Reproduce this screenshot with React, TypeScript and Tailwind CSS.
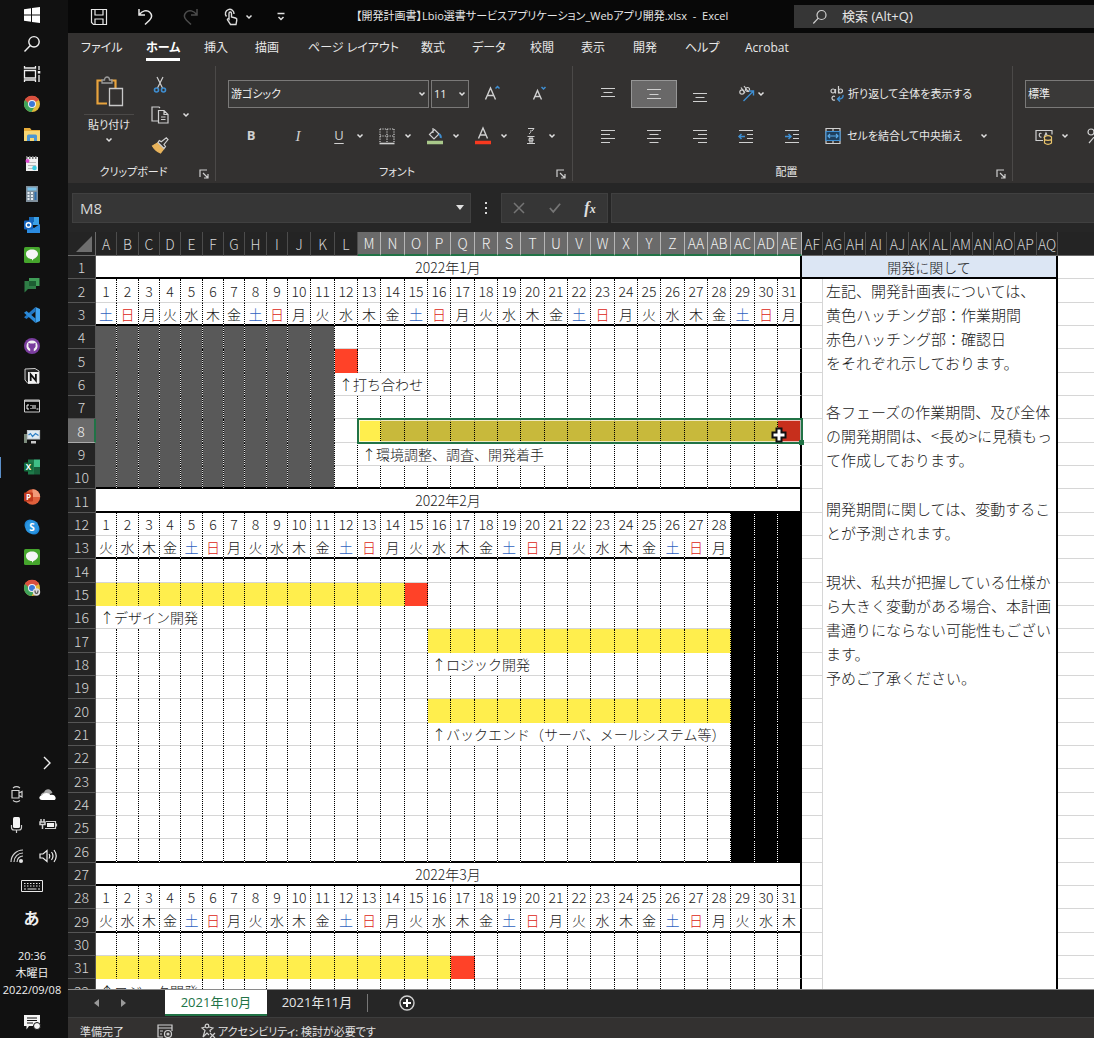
import React from "react";

/* ---------- sheet data ---------- */

type Fill = "gray" | "black" | "yellow" | "red" | "yellowSel" | "redSel";
type Segment = { row: number; start: number; span: number; fill?: Fill; text?: string };

const COLS = 31;
const NOTE_COLS = 12;
const LAST_ROW = 32;

const columnName = (i: number) =>
  i < 26 ? String.fromCharCode(65 + i) : "A" + String.fromCharCode(65 + i - 26);

const columnWidth = (i: number) => {
  if (i < 9) return i % 3 === 1 ? 22 : 21;
  if (i === 30) return 24;
  if (i < COLS) return i % 3 === 1 ? 24 : 23;
  return i % 3 === 2 ? 22 : 21;
};

const WEEK = ["日", "月", "火", "水", "木", "金", "土"];

const months = [
  { title: "2022年1月", row: 1, days: 31, first: 6 },
  { title: "2022年2月", row: 11, days: 28, first: 2 },
  { title: "2022年3月", row: 27, days: 31, first: 2 },
];

const heavyRows = [1, 3, 10, 11, 13, 26, 27, 29];

const rowsBetween = (from: number, to: number) =>
  Array.from({ length: to - from + 1 }, (_, i) => from + i);

const segments: Segment[] = [
  ...rowsBetween(4, 10).map((row): Segment => ({ row, start: 0, span: 11, fill: "gray" })),
  ...rowsBetween(12, 26).map((row): Segment => ({ row, start: 28, span: 3, fill: "black" })),
  { row: 5, start: 11, span: 1, fill: "red" },
  { row: 6, start: 11, span: 4, text: "↑打ち合わせ" },
  { row: 8, start: 12, span: 1, fill: "yellow" },
  { row: 8, start: 13, span: 17, fill: "yellowSel" },
  { row: 8, start: 30, span: 1, fill: "redSel" },
  { row: 9, start: 12, span: 9, text: "↑環境調整、調査、開発着手" },
  { row: 15, start: 0, span: 14, fill: "yellow" },
  { row: 15, start: 14, span: 1, fill: "red" },
  { row: 16, start: 0, span: 5, text: "↑デザイン開発" },
  { row: 17, start: 15, span: 13, fill: "yellow" },
  { row: 18, start: 15, span: 5, text: "↑ロジック開発" },
  { row: 20, start: 15, span: 13, fill: "yellow" },
  { row: 21, start: 15, span: 13, text: "↑バックエンド（サーバ、メールシステム等）" },
  { row: 31, start: 0, span: 16, fill: "yellow" },
  { row: 31, start: 16, span: 1, fill: "red" },
  { row: 32, start: 0, span: 5, text: "↑ロジック開発" },
];

const notes = [
  ["左記、開発計画表については、", "黄色ハッチング部：作業期間", "赤色ハッチング部：確認日", "をそれぞれ示しております。"],
  ["各フェーズの作業期間、及び全体", "の開発期間は、<長め>に見積もっ", "て作成しております。"],
  ["開発期間に関しては、変動するこ", "とが予測されます。"],
  ["現状、私共が把握している仕様か", "ら大きく変動がある場合、本計画", "書通りにならない可能性もござい", "ます。", "予めご了承ください。"],
];

const fillClass: Record<Fill, string> = {
  gray: "bg-[#595959] border-b-[#595959] border-r-black bg-[linear-gradient(#e0e0e0,#e0e0e0)] bg-[length:1px_100%] bg-right bg-no-repeat bg-origin-border",
  black: "bg-black border-b-black border-r-black bg-[linear-gradient(#fff,#fff)] bg-[length:1px_100%] bg-right bg-no-repeat bg-origin-border",
  yellow: "bg-[#ffee4d] border-b-[#ffee4d] border-r-black",
  red: "bg-[#ff4228] border-b-[#ff4228] border-r-black",
  yellowSel: "bg-[#c8b93b] border-b-[#c8b93b] border-r-black",
  redSel: "bg-[#c72f1c] border-b-[#c72f1c] border-r-black",
};

/* ---------- sheet ---------- */

function ScheduleCells({ row }: { row: number }) {
  const heavy = heavyRows.includes(row);
  const bottom = heavy ? "border-b-2 border-b-black" : "border-b border-b-[#d6d6d6]";
  const month = months.find((m) => row >= m.row && row <= m.row + 2);

  if (month && month.row === row) {
    return (
      <td colSpan={COLS} className="border-r-2 border-b-2 border-black text-center">
        {month.title}
      </td>
    );
  }

  const cells: React.ReactNode[] = [];
  for (let c = 0; c < COLS; c++) {
    const seg = segments.find((s) => s.row === row && c >= s.start && c < s.start + s.span);
    const last = c === COLS - 1;
    if (seg?.text) {
      cells.push(
        <td
          key={c}
          colSpan={seg.span}
          className={`overflow-hidden border-r border-r-black pl-1 text-left whitespace-nowrap [border-right-style:dotted] ${bottom}`}
        >
          {seg.text}
        </td>
      );
      c = seg.start + seg.span - 1;
      continue;
    }
    const right = last ? "border-r-2 border-r-black" : "border-r [border-right-style:dotted]";
    let tone = "text-[#1a1a1a]";
    let text = "";
    if (month && c < month.days) {
      if (row === month.row + 1) text = String(c + 1);
      else {
        text = WEEK[(month.first + c) % 7];
        if (text === "土") tone = "text-[#2f62c0]";
        if (text === "日") tone = "text-[#dc2414]";
      }
    }
    const fill = seg?.fill
      ? `${heavy ? "border-b-2" : "border-b"} ${fillClass[seg.fill]} ${heavy ? "border-b-black!" : ""} ${last ? "bg-none" : ""}`
      : `${bottom} border-r-black`;
    cells.push(
      <td key={c} className={`text-center ${tone} ${right} ${fill}`}>
        {text}
      </td>
    );
  }
  return <>{cells}</>;
}

function Sheet() {
  const total = COLS + NOTE_COLS;
  return (
    <div className="relative min-h-0 flex-1 overflow-hidden border-b border-[#8a8a8a] bg-white">
      <table className="w-full min-w-[1026px] table-fixed border-separate border-spacing-0 text-sm leading-[18px] font-light text-[#1a1a1a]">
        <colgroup>
          <col className="w-7" />
          {Array.from({ length: total }, (_, i) => (
            <col key={i} style={{ width: columnWidth(i) }} />
          ))}
          <col />
        </colgroup>
        <thead>
          <tr className="h-6 bg-[#242424] text-[#d6d6d6]">
            <th className="border-r border-b border-[#6a6a6a] p-0" aria-label="すべて選択">
              <svg viewBox="0 0 16 16" className="mr-[3px] ml-auto size-4 fill-[#6e6e6e]">
                <path d="M16 0v16H0z" />
              </svg>
            </th>
            {Array.from({ length: total }, (_, i) => {
              const on = i >= 12 && i <= 30;
              return (
                <th
                  key={i}
                  className={`p-0 font-light ${
                    on
                      ? "border-r border-b-2 border-r-[#b5b5b5] border-b-[#217346] bg-[#6a6a6a] text-[#f2f2f2]"
                      : "border-r border-b border-r-[#4c4c4c] border-b-[#6a6a6a]"
                  }`}
                >
                  <span className="flex justify-center">{columnName(i)}</span>
                </th>
              );
            })}
            <th className="border-b border-[#6a6a6a] p-0" />
          </tr>
        </thead>
        <tbody>
          {rowsBetween(1, LAST_ROW).map((row) => (
            <tr key={row} className={`${row % 3 === 2 ? "h-6" : "h-[23px]"} [&>td]:py-0 [&>td]:pr-0`}>
              <th
                className={`border-r border-b p-0 font-light ${
                  row === 8
                    ? "border-r-2 border-r-[#217346] border-b-[#aaa] bg-[#6a6a6a] text-[#f2f2f2]"
                    : "border-[#555] bg-[#242424] text-[#d6d6d6]"
                }`}
              >
                {row}
              </th>
              <ScheduleCells row={row} />
              {row === 1 ? (
                <td colSpan={NOTE_COLS} className="border-r-2 border-b-2 border-black bg-[#dce6f4] text-center">
                  開発に関して
                </td>
              ) : (
                <td className="border-r border-b border-[#d6d6d6]" />
              )}
              {row === 2 && (
                <td
                  colSpan={NOTE_COLS - 1}
                  rowSpan={LAST_ROW - 1}
                  className="border-r-2 border-black pl-[3px] align-top text-[15px] leading-6 whitespace-nowrap"
                >
                  <div className="flex flex-col gap-[25px]">
                    {notes.map((lines) => (
                      <p key={lines[0]}>
                        {lines.map((line) => (
                          <span key={line} className="block">
                            {line}
                          </span>
                        ))}
                      </p>
                    ))}
                  </div>
                </td>
              )}
              <td className="border-b border-[#d6d6d6]" />
            </tr>
          ))}
        </tbody>
      </table>
      <div className="pointer-events-none absolute top-[186px] left-[289px] h-[26px] w-[446px] border-2 border-[#217346] outline-1 -outline-offset-3 outline-white/70">
        <span className="absolute -right-[3px] -bottom-[3px] size-[5px] bg-[#217346]" />
      </div>
      <svg viewBox="0 0 16 16" className="pointer-events-none absolute top-[195px] left-[703px] size-4">
        <path d="M5.500 1.500h5v4h4v5h-4v4h-5v-4h-4v-5h4z" fill="#fff" stroke="#111" strokeWidth="2" />
      </svg>
    </div>
  );
}

/* ---------- shared icons ---------- */

function Icon({ children, className = "size-5", box = 20 }: { children: React.ReactNode; className?: string; box?: number }) {
  return (
    <svg viewBox={`0 0 ${box} ${box}`} className={`shrink-0 ${className}`} fill="none" stroke="#d0d0d0" strokeWidth="1.2" aria-hidden="true">
      {children}
    </svg>
  );
}

const Chevron = () => (
  <svg viewBox="0 0 8 6" className="h-[6px] w-2 shrink-0" fill="none" stroke="#e0e0e0" strokeWidth="1.5" aria-hidden="true">
    <path d="M1.500 1.500 4 4l2.500-2.500" />
  </svg>
);

const Launcher = () => (
  <button type="button" aria-label="詳細設定" className="absolute right-[6px] bottom-[2px]">
    <Icon className="size-[10px]" box={10}>
      <path d="M1 8V1h7M4 4l4.500 4.500M9 5v4H5" />
    </Icon>
  </button>
);

function Lines({ d }: { d: string }) {
  return (
    <Icon>
      <path d={d} />
    </Icon>
  );
}

/* ---------- title bar ---------- */

function TitleBar() {
  return (
    <header className="flex h-[33px] shrink-0 items-center bg-[#080808] text-[#e6e6e6]">
      <div className="flex w-[288px] shrink-0 items-center pl-[21px]">
        <button type="button" aria-label="上書き保存" className="w-[46px]">
          <Icon>
            <path d="M2.500 2.500h15v15h-13l-2-2zM6 2.500v5.500h8V2.500M6 17.500V12h8v5.500" stroke="#e8e8e8" />
          </Icon>
        </button>
        <button type="button" aria-label="元に戻す" className="w-[46px]">
          <Icon>
            <path d="M4 2v6h6M4.300 7.700C7 3.500 12 2.500 14.800 5.300c2.600 2.600 2 5.700-.3 8L10 17.500" stroke="#e8e8e8" strokeWidth="1.500" />
          </Icon>
        </button>
        <button type="button" aria-label="やり直し" className="w-10">
          <Icon>
            <path d="M16 2v6h-6M15.700 7.700C13 3.500 8 2.500 5.200 5.300c-2.600 2.600-2 5.700.3 8L10 17.500" stroke="#4c4c4c" strokeWidth="1.500" />
          </Icon>
        </button>
        <button type="button" aria-label="タッチ/マウス モード" className="flex w-[55px] items-center gap-1">
          <Icon>
            <path d="M5.500 9.500A4.300 4.300 0 1 1 13 7M8 12V6.500c0-2 2.500-2 2.500 0V10l4 1c1 .3 1.500 1 1.300 2l-.8 4.500H9.500L6.500 13c-.6-1.200.8-1.800 1.500-1z" stroke="#dcdcdc" strokeWidth="1.400" />
          </Icon>
          <Chevron />
        </button>
        <button type="button" aria-label="クイック アクセス ツール バーのカスタマイズ">
          <Icon className="size-[10px]" box={10}>
            <path d="M1.500 1.500h7M2.500 5 5 7.500 7.500 5" stroke="#e0e0e0" strokeWidth="1.500" />
          </Icon>
        </button>
      </div>
      <h1 className="w-[438px] shrink-0 text-[11px] whitespace-pre [font-feature-settings:'palt']">
        【開発計画書】Lbio選書サービスアプリケーション_Webアプリ開発.xlsx  -  Excel
      </h1>
      <label className="flex h-[23px] min-w-0 flex-1 items-center gap-[14px] bg-[#363636] pl-[18px] text-[13px]">
        <Icon className="size-4" box={16}>
          <circle cx="9.500" cy="6" r="4.500" />
          <path d="m6.300 9.200-5 5.300" />
        </Icon>
        <input
          aria-label="検索"
          placeholder="検索 (Alt+Q)"
          className="min-w-0 flex-1 bg-transparent outline-none placeholder:text-[#e6e6e6]"
        />
      </label>
    </header>
  );
}

/* ---------- ribbon ---------- */

const ribbonTabs = ["ファイル", "ホーム", "挿入", "描画", "ページ レイアウト", "数式", "データ", "校閲", "表示", "開発", "ヘルプ", "Acrobat"];

function Group({ label, className, children }: { label: string; className: string; children: React.ReactNode }) {
  return (
    <section aria-label={label} className={`relative flex h-[115px] flex-col ${className}`}>
      <div className="flex-1">{children}</div>
      <h2 className="text-center leading-[18px] text-[#e8e8e8]">{label}</h2>
    </section>
  );
}

function Split({ label, children }: { label: string; children: React.ReactNode }) {
  return (
    <button type="button" aria-label={label} className="flex w-12 shrink-0 items-center">
      <span className="flex w-[26px] justify-center">{children}</span>
      <span className="flex w-4 justify-center">
        <Chevron />
      </span>
    </button>
  );
}

function AlignButton({ label, d, active = false }: { label: string; d: string; active?: boolean }) {
  return (
    <button
      type="button"
      aria-label={label}
      className={`flex h-7 w-[46px] items-center justify-center ${active ? "border border-[#969696] bg-[#696868]" : ""}`}
    >
      <Lines d={d} />
    </button>
  );
}

function Dropdown({ label, value, className }: { label: string; value: string; className: string }) {
  return (
    <div className={`relative flex h-7 items-center ${className}`}>
      <select aria-label={label} defaultValue={value} className="h-full w-full appearance-none border border-[#7a7978] bg-[#3a3938] pl-[2px] text-[#f0f0f0]">
        <option>{value}</option>
      </select>
      <span className="pointer-events-none absolute right-[3px]">
        <Chevron />
      </span>
    </div>
  );
}

function Ribbon() {
  return (
    <div className="shrink-0 bg-[#333130] text-[#e8e8e8] [font-feature-settings:'palt']">
      <nav className="grid h-[33px] grid-cols-[65px_58px_51px_53px_113px_51px_58px_51px_52px_52px_60px_60px] items-center pb-[3px] pl-[13px] text-xs">
        {ribbonTabs.map((t) => (
          <a key={t} href="#" className="flex whitespace-nowrap">
            <span className={t === "ホーム" ? "border-b-[3px] border-white pt-[3px] leading-[20px] font-bold text-white" : ""}>{t}</span>
          </a>
        ))}
      </nav>
      <div className="flex h-[117px] items-start overflow-hidden text-[11px]">
        <Group label="クリップボード" className="w-[148px] shrink-0 border-r border-[#4b4948] pr-4">
          <div className="flex pt-[9px] pl-4">
            <button type="button" className="flex w-[50px] flex-col items-center">
              <svg viewBox="0 0 30 32" className="h-8 w-[30px]" fill="none" aria-hidden="true">
                <path d="M13 28.500H3.500v-23H8M17 5.500h4.500V13" stroke="#e8a33d" strokeWidth="2.200" />
                <path d="M8 8V5h2.500c0-4 5-4 5 0H18v3z" stroke="#9a9a9a" strokeWidth="1.300" />
                <path d="M15.500 13.500h13v17h-13z" fill="#333130" stroke="#c8c8c8" strokeWidth="1.300" />
              </svg>
              <span className="mt-[7px] mb-[3px] w-full border-t border-[#4b4948] pt-[2px] text-center whitespace-nowrap">貼り付け</span>
              <Chevron />
            </button>
            <div className="ml-[16px] flex flex-col gap-[10px]">
              <button type="button" aria-label="切り取り">
                <Icon>
                  <path d="m7 2 5.500 11M13 2 7.500 13" />
                  <circle cx="6.500" cy="15" r="2" stroke="#3f8fd2" strokeWidth="1.600" />
                  <circle cx="13.500" cy="15" r="2" stroke="#3f8fd2" strokeWidth="1.600" />
                </Icon>
              </button>
              <button type="button" aria-label="コピー" className="flex items-center gap-3">
                <Icon>
                  <path d="M8 16H2V2h7l1 1M8.500 5.500H14l4 4v8.500H8.500zM14 5.500v4h4M11 12h4.500M11 14.500h4.500" />
                </Icon>
                <Chevron />
              </button>
              <button type="button" aria-label="書式のコピー/貼り付け">
                <Icon>
                  <path d="m2.500 11 5-3 6 6-3 4q-5-2-8-7z" fill="#e9b45c" stroke="#e9b45c" />
                  <path d="m8 7.500 6 6 1.500-2-1.500-2 4-5-1.700-1.700-5 4-2-1.300z" fill="#333130" />
                </Icon>
              </button>
            </div>
          </div>
          <Launcher />
        </Group>

        <Group label="フォント" className="w-[357px] shrink-0 border-r border-[#4b4948] pr-[6px] pl-3">
          <div className="flex flex-col gap-[14px] pt-[14px]">
            <div className="flex items-center">
              <Dropdown label="フォント" value="游ゴシック" className="w-[201px]" />
              <Dropdown label="フォント サイズ" value="11" className="ml-[2px] w-[38px]" />
              <button type="button" aria-label="フォント サイズの拡大" className="ml-[14px] w-12">
                <Icon>
                  <path d="M2.500 15.500 7.500 4l5 11.500M4.300 11.500h6.400" strokeWidth="1.400" />
                  <path d="m12.500 4.500 2-2 2 2" stroke="#3f8fd2" strokeWidth="1.500" />
                </Icon>
              </button>
              <button type="button" aria-label="フォント サイズの縮小">
                <Icon>
                  <path d="m2.500 15.500 4-9 4 9M4 12.500h5" strokeWidth="1.400" />
                  <path d="m10.500 3 2 2 2-2" stroke="#3f8fd2" strokeWidth="1.500" />
                </Icon>
              </button>
            </div>
            <div className="flex h-7 items-center text-[13px] text-[#d0d0d0]">
              <button type="button" className="w-[46px] font-bold">B</button>
              <button type="button" className="w-[52px] pr-1 font-['Liberation_Serif',serif] text-[15px] italic">I</button>
              <Split label="下線">
                <span className="underline underline-offset-3">U</span>
              </Split>
              <Split label="罫線">
                <Icon>
                  <path d="M3 3h14M3 10h14M3 3v13M10 3v13M17 3v13" strokeDasharray="1.200 1.200" />
                  <path d="M2.500 17.500h15" strokeWidth="1.600" />
                </Icon>
              </Split>
              <Split label="塗りつぶしの色">
                <Icon>
                  <path d="m4.500 8.500 5-5 4.500 4.500-5 5zM8 2v5" />
                  <path d="M14 8c1.500 1 2 2.500 1.700 4" stroke="#3f8fd2" strokeWidth="2" />
                  <path d="M2 16.500h16" stroke="#a9c88a" strokeWidth="3.500" />
                </Icon>
              </Split>
              <Split label="フォントの色">
                <Icon>
                  <path d="M5.500 12.500 10 2l4.500 10.500M7 9h6" strokeWidth="1.400" />
                  <path d="M2 16.500h16" stroke="#f8391f" strokeWidth="3.500" />
                </Icon>
              </Split>
              <Split label="ふりがな">
                <Icon>
                  <path d="M7 2.500h6l-2 2.500M10 4c0 2-.5 3-2 4M6.500 10.500h7M8 12.500v2.500h4v-2.500zM6 17.500h8M9 10.500v7M11 10.500v7" strokeWidth="1" />
                </Icon>
              </Split>
            </div>
          </div>
          <Launcher />
        </Group>

        <Group label="配置" className="w-[440px] shrink-0 border-r border-[#4b4948] pr-6 pl-3">
          <div className="flex flex-col gap-[14px] pt-[14px]">
            <div className="flex items-center">
              <AlignButton label="上揃え" d="M3 4.500h14M5.500 8.500h9M3 12.500h14" />
              <AlignButton label="上下中央揃え" active d="M3 5.500h14M5.500 10.500h9M3 14.500h14" />
              <AlignButton label="下揃え" d="M3 9.500h14M5.500 13.500h9M3 17.500h14" />
              <button type="button" aria-label="方向" className="flex w-[106px] items-center pl-[14px]">
                <Icon>
                  <circle cx="5" cy="8" r="2.200" />
                  <path d="M4 3.500 8 9M7 2l4.500 6" />
                  <circle cx="10.500" cy="5.500" r="2" />
                  <path d="m6.500 17 9.500-9.500M12 7h4.500v4.500" stroke="#3f8fd2" strokeWidth="1.400" />
                </Icon>
                <Chevron />
              </button>
              <button type="button" className="flex items-center gap-[3px] whitespace-nowrap">
                <Icon className="size-4" box={16}>
                  <circle cx="4" cy="5" r="2" />
                  <path d="M6.500 3v4.500M9.500 0v7.500M6 10.500c-4-2-4 5 0 3.500" />
                  <circle cx="11.500" cy="5" r="2" />
                  <path d="M14 9c.5 2.500-1 4-5 4M11 10.500 8.500 13l2.500 2.500" stroke="#3f8fd2" strokeWidth="1.400" />
                </Icon>
                折り返して全体を表示する
              </button>
            </div>
            <div className="flex h-7 items-center">
              <AlignButton label="左揃え" d="M3 4.500h14M3 8.500h9M3 12.500h14M3 16.500h9" />
              <AlignButton label="中央揃え" d="M3 4.500h14M5.500 8.500h9M3 12.500h14M5.500 16.500h9" />
              <AlignButton label="右揃え" d="M3 4.500h14M8 8.500h9M3 12.500h14M8 16.500h9" />
              <button type="button" aria-label="インデントを減らす" className="flex w-[46px] justify-center">
                <Icon>
                  <path d="M3 4.500h14M11 8.500h6M11 12.500h6M3 16.500h14" />
                  <path d="M9 10.500H3M5.500 8 3 10.500 5.500 13" stroke="#3f8fd2" strokeWidth="1.500" />
                </Icon>
              </button>
              <button type="button" aria-label="インデントを増やす" className="flex w-[46px] justify-center">
                <Icon>
                  <path d="M3 4.500h14M11 8.500h6M11 12.500h6M3 16.500h14" />
                  <path d="M3 10.500h6M6.500 8 9 10.500 6.500 13" stroke="#3f8fd2" strokeWidth="1.500" />
                </Icon>
              </button>
              <button type="button" className="ml-2 flex items-center gap-1 whitespace-nowrap">
                <Icon>
                  <path d="M3 2.500h14v15H3zM10 2.500v3M10 14.500v3" />
                  <path d="M3 5.500h14v9H3z" fill="#1f3f5c" stroke="#3f8fd2" />
                  <path d="M5 10h10M7 8l-2 2 2 2M13 8l2 2-2 2" stroke="#5aa9e6" />
                </Icon>
                セルを結合して中央揃え
              </button>
              <button type="button" aria-label="セルの結合オプション" className="ml-auto">
                <Chevron />
              </button>
            </div>
          </div>
          <Launcher />
        </Group>

        <section aria-label="数値" className="flex min-w-0 flex-1 flex-col gap-[14px] overflow-hidden pt-[14px] pl-3">
          <Dropdown label="表示形式" value="標準" className="w-[150px]" />
          <div className="flex h-7 items-center gap-[6px] pl-[6px]">
            <Split label="通貨表示形式">
              <Icon>
                <path d="M9 14.500H2v-10h16v4M7.500 7.500c-3-1.500-3 4.500 0 3.500M10 12l2-5 1 2" />
                <path d="M10.500 11v6c2 1.500 5 1.500 7 0v-6c-2-1.500-5-1.500-7 0zM10.500 13.500c2 1 5 1 7 0" fill="#333130" stroke="#e9c46a" />
              </Icon>
            </Split>
            <button type="button" aria-label="パーセント スタイル">
              <Icon>
                <circle cx="6" cy="6" r="3" />
                <circle cx="14" cy="14" r="3" />
                <path d="M16 3 4 17" />
              </Icon>
            </button>
          </div>
        </section>
      </div>
    </div>
  );
}

/* ---------- formula bar ---------- */

function FormulaBar() {
  return (
    <div className="flex h-[49px] shrink-0 items-center bg-[#262626] pl-1">
      <div className="relative flex h-[30px] w-[399px] items-center border border-[#404040] bg-[#363636]">
        <input aria-label="名前ボックス" defaultValue="M8" className="h-full w-full bg-transparent pl-[7px] text-[15px] text-[#d8d8d8] outline-none" />
        <svg viewBox="0 0 8 5" className="absolute right-[6px] h-[5px] w-2 fill-[#e0e0e0]">
          <path d="M0 0h8L4 5z" />
        </svg>
      </div>
      <svg viewBox="0 0 4 14" className="mx-[13px] h-[14px] w-1 fill-[#d8d8d8]">
        <path d="M1 1h2v2H1zM1 6h2v2H1zM1 11h2v2H1z" />
      </svg>
      <div className="flex h-[30px] w-[107px] items-center justify-around border border-[#404040] bg-[#363636]">
        <button type="button" aria-label="キャンセル">
          <Icon className="size-3" box={12}>
            <path d="m1 1 10 10M11 1 1 11" stroke="#757575" strokeWidth="1.500" />
          </Icon>
        </button>
        <button type="button" aria-label="入力">
          <Icon className="h-3 w-[14px]" box={14}>
            <path d="m1 7 4 4.500L13 2" stroke="#757575" strokeWidth="2" />
          </Icon>
        </button>
        <button type="button" aria-label="関数の挿入" className="font-['Liberation_Serif',serif] text-base leading-5 font-bold text-[#e0e0e0] italic">
          f<span className="text-xs">x</span>
        </button>
      </div>
      <input aria-label="数式バー" className="ml-[3px] h-[30px] min-w-0 flex-1 border border-r-0 border-[#404040] bg-[#363636] outline-none" />
    </div>
  );
}

/* ---------- sheet tabs and status ---------- */

function BottomBars() {
  return (
    <>
      <nav className="flex h-7 shrink-0 items-start border-b border-[#3d3d3d] bg-[#262626] text-[13px] leading-6">
        <div className="flex h-[26px] w-[97px] items-center gap-[22px] pl-[26px]">
          <button type="button" aria-label="前のシート">
            <svg viewBox="0 0 5 8" className="h-2 w-[5px] fill-[#999]"><path d="M5 0v8L0 4z" /></svg>
          </button>
          <button type="button" aria-label="次のシート">
            <svg viewBox="0 0 5 8" className="h-2 w-[5px] fill-[#999]"><path d="M0 0v8l5-4z" /></svg>
          </button>
        </div>
        <button type="button" className="w-[102px] border-b-2 border-[#217346] bg-white text-[#217346]">2021年10月</button>
        <button type="button" className="w-[100px] text-[#e6e6e6]">2021年11月</button>
        <span className="mt-1 h-[18px] w-px bg-[#777]" />
        <button type="button" aria-label="新しいシート" className="mt-1 ml-[30px]">
          <Icon className="size-[18px]" box={18}>
            <circle cx="9" cy="9" r="7" strokeWidth="1.400" />
            <path d="M9 5v8M5 9h8" strokeWidth="2" stroke="#fff" />
          </Icon>
        </button>
      </nav>
      <footer className="flex h-5 shrink-0 items-start overflow-hidden bg-[#333130] pt-[5px] pl-3 text-[11px] leading-[18px] whitespace-nowrap text-[#e0e0e0] [font-feature-settings:'palt']">
        <span className="w-[77px]">準備完了</span>
        <Icon className="mr-[27px] size-4" box={16}>
          <path d="M6 14H1V2h14v6M1 5h14M3 8h3M3 11h2" />
          <circle cx="11" cy="11" r="3.500" />
          <circle cx="11" cy="11" r="1" fill="#d0d0d0" />
        </Icon>
        <Icon className="mr-[2px] size-4" box={16}>
          <circle cx="7" cy="3" r="1.800" />
          <path d="M5 4 2 5l3 2.500L3 14l4-4 2 2M9 4l4 1-3 2.500.5 1.500M10 10l5 5M15 10l-5 5" />
        </Icon>
        <span>アクセシビリティ: 検討が必要です</span>
      </footer>
    </>
  );
}

/* ---------- taskbar ---------- */

const Chrome = () => (
  <>
    <circle cx="9" cy="9" r="8" fill="#e2b93a" stroke="none" />
    <path d="M9 9 2.100 5A8 8 0 0 1 15.900 5z" fill="#d9503f" stroke="none" />
    <path d="M9 9 2.100 5A8 8 0 0 0 8.500 17l3.500-6z" fill="#3fa35a" stroke="none" />
    <path d="M9 5h7a8 8 0 0 0-14-.200L6 9z" fill="#d9503f" stroke="none" />
    <circle cx="9" cy="9" r="4" fill="#f2f2f2" stroke="none" />
    <circle cx="9" cy="9" r="3" fill="#3b78d8" stroke="none" />
  </>
);

const Line = () => (
  <>
    <rect x="1" y="1" width="16" height="16" rx="1.500" fill="#45a52c" stroke="none" />
    <path d="M9 3.500c3.500 0 6 2 6 4.500s-2.500 4-4.500 5L9 14.800V13c-3.500 0-6-2.200-6-5s2.500-4.500 6-4.500z" fill="#f6f6f6" stroke="none" />
  </>
);

const Letter = ({ children, x = 9, y = 13, size = 11 }: { children: string; x?: number; y?: number; size?: number }) => (
  <text x={x} y={y} fontSize={size} fontWeight="bold" fill="#fff" stroke="none" textAnchor="middle" fontFamily="Open Sans">
    {children}
  </text>
);

const apps: { name: string; art: React.ReactNode }[] = [
  { name: "Chrome", art: <Chrome /> },
  {
    name: "エクスプローラー",
    art: (
      <g stroke="none">
        <path d="M1 3h6l1.500 2H17v11H1z" fill="#e8ad3a" />
        <path d="M1 6h16v10H1z" fill="#f7d673" />
        <path d="M4 16v-5q0-1.500 1.500-1.500h7q1.500 0 1.500 1.500v5h-3v-3H7v3z" fill="#4c96d2" />
      </g>
    ),
  },
  {
    name: "メモ",
    art: (
      <g stroke="none">
        <path d="M3 2h12v14H3z" fill="#f1f1f1" />
        <path d="M3 1h1.500v3H3zM6 1h1.500v3H6zM9 1h1.500v3H9zM12 1h1.500v3H12z" fill="#777" />
        <path d="M5 7h8v1H5zM5 10h8v1H5zM5 13h6v1H5z" fill="#bbb" />
        <circle cx="4.500" cy="6" r="2" fill="#e04bd3" />
        <circle cx="11.500" cy="13" r="2.300" fill="#3dcbe0" />
      </g>
    ),
  },
  {
    name: "電卓",
    art: (
      <g stroke="none">
        <path d="M3 1h12v16H3z" fill="#7f8f9c" />
        <path d="M4.500 2.500h9v3h-9z" fill="#7bc3ea" />
        <path d="M4.500 7h2v2h-2zM8 7h2v2H8zM4.500 10h2v2h-2zM8 10h2v2H8zM4.500 13h2v2h-2zM8 13h2v2H8z" fill="#e7edf2" />
        <path d="M11.500 7h2v8h-2z" fill="#2e6fae" />
      </g>
    ),
  },
  {
    name: "Outlook",
    art: (
      <g stroke="none">
        <path d="M6 1h10v8H6z" fill="#3ba0e6" />
        <path d="M4 8l7 4 6-4v9H4z" fill="#2b8be0" />
        <path d="M6 1h5v5H6z" fill="#1668b8" />
        <rect x="1" y="4.500" width="9" height="9" rx="1" fill="#1565c0" />
        <circle cx="5.500" cy="9" r="2.300" fill="none" stroke="#fff" strokeWidth="1.400" />
      </g>
    ),
  },
  { name: "LINE", art: <Line /> },
  {
    name: "Google Chat",
    art: (
      <g stroke="none">
        <path d="M6 2h10.500v8H6z" fill="#3f9d57" />
        <path d="M1.500 5H13v8H5l-3.500 3.500z" fill="#2f7d46" />
        <path d="M6 5h7v5H6z" fill="#1d5e33" />
      </g>
    ),
  },
  {
    name: "Visual Studio Code",
    art: (
      <g stroke="none">
        <path d="M12.500 1 17 3v12l-4.500 2z" fill="#3fa2ee" />
        <path d="M12.500 1v4.500L3.500 13 1 11.300z" fill="#2277c4" />
        <path d="M12.500 17v-4.500L3.500 5 1 6.700z" fill="#2b8ad8" />
      </g>
    ),
  },
  {
    name: "GitHub Desktop",
    art: (
      <g stroke="none">
        <circle cx="9" cy="9" r="8" fill="#7a3d9e" />
        <path d="M9 3.500a5.500 5.500 0 0 0-1.800 10.700v-2.400c-1.500-1-2.200-2.300-1.700-4l-.1-2.100 1.900.8h3.400l1.900-.8-.1 2.100c.5 1.700-.2 3-1.700 4v2.400A5.500 5.500 0 0 0 9 3.500z" fill="#f2f2f2" />
      </g>
    ),
  },
  {
    name: "Notion",
    art: (
      <>
        <path d="m2 2 10-.500 4 2.500v12l-11 .500-3-3.500z" fill="#222" stroke="#ccc" strokeWidth="1" />
        <path d="M5 5h11v11.500H5z" fill="#f0f0f0" stroke="none" />
        <path d="M7.700 14V7.500l5.200 6V7" stroke="#111" strokeWidth="1.800" />
      </>
    ),
  },
  {
    name: "コマンド プロンプト",
    art: (
      <>
        <path d="M1.500 3h15v12h-15z" fill="#080808" stroke="#ccc" strokeWidth="1" />
        <path d="M1.500 4h15" stroke="#ccc" strokeWidth="1.500" />
        <path d="M6 8H4v4h2M8 8v1M8 11v1M10 8v4M12 8v4M13.500 12h2" stroke="#fff" strokeWidth="1" />
      </>
    ),
  },
  {
    name: "リモート",
    art: (
      <>
        <path d="M1 7h3v9H1z" fill="#7c8b7c" stroke="none" />
        <path d="M4.500 3.500h12v8.500h-12z" fill="#dfeaf3" stroke="#bfc7cc" />
        <path d="m5.500 8 2-1.500 2 3 3-3 3 2" stroke="#2d7fc4" />
        <path d="M8 14h5v2.500H8z" fill="#c9c9c9" stroke="none" />
      </>
    ),
  },
  {
    name: "Excel",
    art: (
      <g stroke="none">
        <path d="M5 1.500h6v15H5z" fill="#1f7a4a" />
        <path d="M11 1.500h6v7.500h-6z" fill="#3fbf86" />
        <path d="M11 9h6v7.500h-6z" fill="#17603a" />
        <rect x="1" y="4.500" width="9" height="9" rx="1" fill="#136c3c" />
        <Letter x={5.500} y={12} size={8}>X</Letter>
      </g>
    ),
  },
  {
    name: "PowerPoint",
    art: (
      <g stroke="none">
        <circle cx="9.500" cy="9" r="7.700" fill="#e0603c" />
        <path d="M9.500 1.300A7.700 7.700 0 0 1 17.200 9H9.500z" fill="#f29a78" />
        <rect x="1" y="4.500" width="9" height="9" rx="1" fill="#c03a1e" />
        <Letter x={5.500} y={12} size={8}>P</Letter>
      </g>
    ),
  },
  {
    name: "Skype",
    art: (
      <g stroke="none">
        <circle cx="7" cy="7" r="5.500" fill="#1c86d8" />
        <circle cx="11" cy="11" r="5.500" fill="#1c86d8" />
        <circle cx="9" cy="9" r="6.700" fill="#2b95e0" />
        <Letter size={10} y={12.600}>S</Letter>
      </g>
    ),
  },
  { name: "LINE 2", art: <Line /> },
  {
    name: "Chrome プロファイル",
    art: (
      <>
        <Chrome />
        <circle cx="13.500" cy="13" r="3.700" fill="#ddd" stroke="none" />
        <path d="M12 11.500c0 4 3 4 3 0" stroke="#555" />
      </>
    ),
  },
];

function AppButton({ name, art }: { name: string; art: React.ReactNode }) {
  return (
    <button
      type="button"
      aria-label={name}
      className={`flex h-[30px] w-full items-center justify-center pr-1 ${name === "Excel" ? "bg-[linear-gradient(#5b8fc9,#5b8fc9)] bg-[length:1px_21px] bg-left bg-no-repeat" : ""}`}
    >
      <Icon className="size-[18px]" box={18}>{art}</Icon>
    </button>
  );
}

function TrayPair({ names, children }: { names: [string, string]; children: [React.ReactNode, React.ReactNode] }) {
  return (
    <div className="flex h-[31px] items-center gap-[11px] pl-[7px]">
      {children.map((art, i) => (
        <button key={i} type="button" aria-label={names[i]}>
          <Icon>{art}</Icon>
        </button>
      ))}
    </div>
  );
}

function Taskbar() {
  const blocks = [0, 4, 8, 12, 16].map((i) => apps.slice(i, i + 4));
  return (
    <aside className="flex h-full w-[68px] shrink-0 flex-col justify-between bg-[#111] text-[#f0f0f0]">
      <div>
        <div className="flex flex-col items-center pr-1">
          <button type="button" aria-label="スタート" className="flex h-[29px] items-center">
            <Icon className="size-[18px]" box={18}>
              <path d="M1 3.200 8 2.200v6.300H1zM9 2l8-1v7.500H9zM1 9.500h7v6.300l-7-1zM9 9.500h8V17l-8-1z" fill="#fff" stroke="none" />
            </Icon>
          </button>
          <button type="button" aria-label="検索" className="flex h-[29px] items-center">
            <Icon className="size-[18px]" box={18}>
              <circle cx="11" cy="6.800" r="5.200" stroke="#f0f0f0" strokeWidth="1.400" />
              <path d="M7.300 10.500 1.500 16.500" stroke="#f0f0f0" strokeWidth="1.400" />
            </Icon>
          </button>
          <button type="button" aria-label="タスク ビュー" className="flex h-[31px] items-center">
            <Icon className="size-[18px]" box={18}>
              <path d="M1.500 5.500h11v7.500h-11zM1.500 1v2h11V1M1.500 17v-2h11v2M16 1v4M16 10v7" stroke="#f0f0f0" strokeWidth="1.300" />
              <path d="M14.800 6h2.500v2.500h-2.500z" fill="#f0f0f0" stroke="none" />
            </Icon>
          </button>
        </div>
        <div className="flex flex-col gap-px">
          {blocks.map((block) => (
            <div key={block[0].name}>
              {block.map((a) => (
                <AppButton key={a.name} name={a.name} art={a.art} />
              ))}
            </div>
          ))}
        </div>
      </div>

      <div className="flex flex-col">
        <button type="button" aria-label="隠れているインジケーターを表示" className="flex h-[31px] items-center pl-[37px]">
          <Icon>
            <path d="m7 4 6 6-6 6" stroke="#f0f0f0" strokeWidth="1.400" />
          </Icon>
        </button>
        <TrayPair names={["会議", "OneDrive"]}>
          <>
            <path d="M5 6.500h7v7.500H5zM12 9l3-1.500v5.500l-3-1.500M6 4c2-1.500 5-1.500 7 0M6 16.500c2 1.500 5 1.500 7 0" />
          </>
          <>
            <path d="M3 13c-1-3 1.500-4.500 3-4.500C7.500 4 13 4 14.500 9z" fill="#aaa" stroke="none" />
            <path d="M4 16c-3.500 0-3.500-4.500 0-4.500 2-3.500 7-3 8.500-.500 4.500-2 7.500 5 3 5z" fill="#fff" stroke="none" />
          </>
        </TrayPair>
        <TrayPair names={["マイク", "電源"]}>
          <>
            <rect x="6" y="2" width="7" height="11" rx="1.500" fill="#f5f5f5" stroke="none" />
            <path d="M4.500 10v2.500q0 2.500 2.500 2.500h5q2.500 0 2.500-2.500V10M9.500 15v3" />
          </>
          <>
            <path d="M8 6.500h9.500v7H7M18.500 8.500v3" />
            <path d="M9 8h7v4H9z" fill="#f0f0f0" stroke="none" />
            <path d="M3 4v3M6 4v3M2 7h5v2.500H2zM4.500 10v4" strokeWidth="1.500" />
          </>
        </TrayPair>
        <TrayPair names={["ネットワーク", "音量"]}>
          <>
            <path d="M4 16A12 12 0 0 1 16 4M7 16a9 9 0 0 1 9-9M10 16a6 6 0 0 1 6-6" />
            <circle cx="14" cy="15" r="1.500" fill="#eee" />
          </>
          <>
            <path d="M2 8h3l4-3.500v11L5 12H2zM11 8q1.500 2 0 4.500M13.500 6q3 4 0 8M16 4q4.500 6 0 12" stroke="#f0f0f0" />
          </>
        </TrayPair>
        <button type="button" aria-label="タッチ キーボード" className="flex h-[29px] items-center justify-center pr-[5px]">
          <svg viewBox="0 0 24 14" className="h-[14px] w-6" fill="none" stroke="#e8e8e8" aria-hidden="true">
            <path d="M1.500 1.500h21v11h-21z" />
            <path d="M4 4.500h16M4 7h16" strokeDasharray="1.500 1.500" />
            <path d="M4 10h2M7.500 10h9M18 10h2" />
          </svg>
        </button>
        <button type="button" aria-label="入力モード" className="h-[35px] pr-[5px] text-base font-bold">あ</button>
        <time className="pt-3 pr-1 text-center text-[11px] leading-[17px]">
          20:36
          <br />
          木曜日
          <br />
          2022/09/08
        </time>
        <button type="button" aria-label="通知" className="mt-[15px] mb-[7px] flex justify-center pr-1">
          <Icon className="size-[18px]" box={18}>
            <path d="M1 2h16v11H6l-2.500 3.500V13H1z" fill="#f5f5f5" stroke="none" />
            <path d="M4 5h10M4 7.500h10M4 10h6" stroke="#111" strokeWidth="1" />
            <circle cx="14" cy="13" r="3.500" fill="#f5f5f5" stroke="#111" strokeWidth="1" />
          </Icon>
        </button>
      </div>
    </aside>
  );
}

export default function App() {
  return (
    <div className="flex h-screen w-full overflow-hidden bg-[#262626] font-['Open_Sans','Noto_Sans_CJK_JP',sans-serif]">
      <Taskbar />
      <main className="flex min-w-0 flex-1 flex-col">
        <TitleBar />
        <Ribbon />
        <FormulaBar />
        <div className="flex min-h-0 flex-1 flex-col font-['Noto_Sans_CJK_JP',sans-serif]">
          <Sheet />
        </div>
        <BottomBars />
      </main>
    </div>
  );
}
